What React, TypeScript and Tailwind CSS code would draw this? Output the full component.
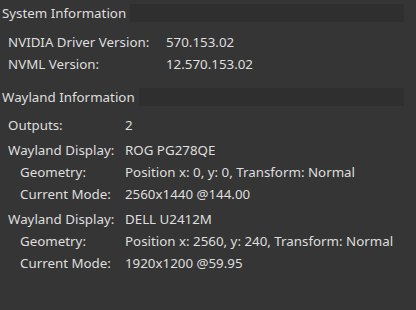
import React from 'react';

type Row = { label: string; value: string; indent?: boolean; gapTop?: boolean };

const SYSTEM_ROWS: Row[] = [
  { label: 'NVIDIA Driver Version:', value: '570.153.02' },
  { label: 'NVML Version:', value: '12.570.153.02' },
];

const WAYLAND_ROWS: Row[] = [
  { label: 'Outputs:', value: '2' },
  { label: 'Wayland Display:', value: 'ROG PG278QE', gapTop: true },
  { label: 'Geometry:', value: 'Position x: 0, y: 0, Transform: Normal', indent: true },
  { label: 'Current Mode:', value: '2560x1440 @144.00', indent: true },
  { label: 'Wayland Display:', value: 'DELL U2412M', gapTop: true },
  { label: 'Geometry:', value: 'Position x: 2560, y: 240, Transform: Normal', indent: true },
  { label: 'Current Mode:', value: '1920x1200 @59.95', indent: true },
];

function SectionHeader({ title }: { title: string }) {
  return (
    <div className="flex h-[18px] items-center">
      <span className="pl-[2px] leading-[18px]">{title}</span>
      <div className="ml-[4px] mr-[12px] h-full flex-1 bg-[#2f2f2f]" />
    </div>
  );
}

function InfoRows({ rows, valueX }: { rows: Row[]; valueX: string }) {
  return (
    <div className="flex flex-col">
      {rows.map((r, i) => (
        <div key={i} className={`flex h-[22px] items-center ${r.gapTop ? 'mt-[3px]' : ''}`}>
          <span className={`${valueX} shrink-0 ${r.indent ? 'pl-[20px]' : 'pl-[8px]'}`}>{r.label}</span>
          <span className="whitespace-nowrap">{r.value}</span>
        </div>
      ))}
    </div>
  );
}

export default function App() {
  return (
    <div
      className="h-[310px] w-[416px] overflow-hidden bg-[#353535] pt-[4px] text-[13.33px] text-[#dedede]"
      style={{ fontFamily: '"Noto Sans", sans-serif' }}
    >
      <SectionHeader title="System Information" />
      <div className="mt-[10px]">
        <InfoRows rows={SYSTEM_ROWS} valueX="w-[166px]" />
      </div>
      <div className="mt-[12px]">
        <SectionHeader title="Wayland Information" />
      </div>
      <div className="mt-[9px]">
        <InfoRows rows={WAYLAND_ROWS} valueX="w-[125px]" />
      </div>
    </div>
  );
}
